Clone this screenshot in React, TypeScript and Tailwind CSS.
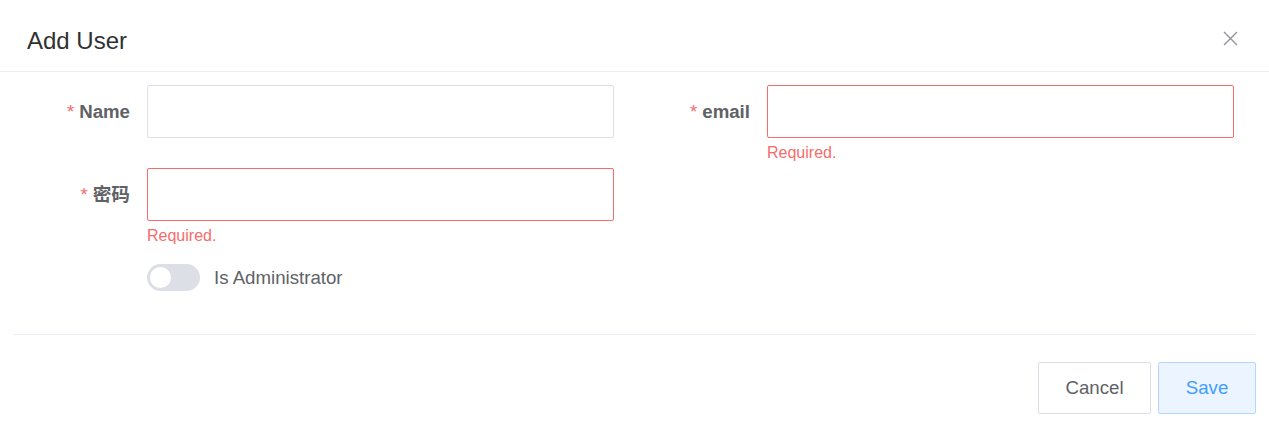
import React from "react";

const font = { fontFamily: '"Liberation Sans", Arial, "Noto Sans CJK SC", sans-serif' };

function Label({ text, w }: { text: string; w: string }) {
  return (
    <div className={`${w} h-[53px] pr-[17px] flex items-center justify-end shrink-0`}>
      <span className="text-[#f56c6c] text-[18.67px] mr-[5px]">*</span>
      <span className="text-[#606266] font-bold text-[18.67px]">{text}</span>
    </div>
  );
}

function Field({ error }: { error?: boolean }) {
  if (error) {
    return (
      <div className="relative w-[467px] shrink-0">
        <div className="h-[53px] w-full rounded-[2px] border border-[#f56c6c] bg-white" />
        <div className="absolute left-0 top-full pt-[7px] text-[16px] leading-none text-[#f56c6c]">
          Required.
        </div>
      </div>
    );
  }
  return (
    <div className="relative w-[467px] shrink-0">
      <div className="h-[53px] w-full rounded-[2px] border border-[#dcdfe6] bg-white" />
    </div>
  );
}

export default function App() {
  return (
    <div className="w-[1269px] h-[427px] bg-white overflow-hidden" style={font}>
      <div className="h-[72px] border-b border-[#ebeef5] flex items-center justify-between pt-[11px] pl-[27px] pr-[31px]">
        <span className="text-[24px] text-[#303133] leading-none">Add User</span>
        <svg width="15" height="15" viewBox="0 0 15 15" className="-mt-[6px]">
          <path d="M1 1L14 14M14 1L1 14" stroke="#909399" strokeWidth="1.4" />
        </svg>
      </div>
      <div className="pt-[13px] px-[13px]">
        <div className="-ml-[13px]">
          <div className="flex mb-[30px]">
            <Label text="Name" w="w-[147px]" />
            <Field />
            <Label text="email" w="w-[153px]" />
            <Field error />
          </div>
          <div className="flex mb-[30px]">
            <Label text="密码" w="w-[147px]" />
            <Field error />
          </div>
          <div className="flex mb-[30px]">
            <div className="w-[147px] shrink-0" />
            <div className="h-[53px] flex items-center">
              <div className="w-[53px] h-[27px] rounded-full bg-[#dcdfe6] relative">
                <div className="absolute left-[3px] top-[3px] w-[21px] h-[21px] rounded-full bg-white" />
              </div>
              <span className="ml-[14px] text-[18.67px] text-[#606266]">Is Administrator</span>
            </div>
          </div>
        </div>
        <div className="border-t border-[#ebeef5]" />
        <div className="flex justify-end gap-[7px] pt-[27px]">
          <button className="h-[52px] w-[113px] rounded-[2px] border border-[#dcdfe6] bg-white text-[18.67px] text-[#606266]">
            Cancel
          </button>
          <button className="h-[52px] w-[98px] rounded-[2px] border border-[#b3d8ff] bg-[#ecf5ff] text-[18.67px] text-[#409eff]">
            Save
          </button>
        </div>
      </div>
    </div>
  );
}
